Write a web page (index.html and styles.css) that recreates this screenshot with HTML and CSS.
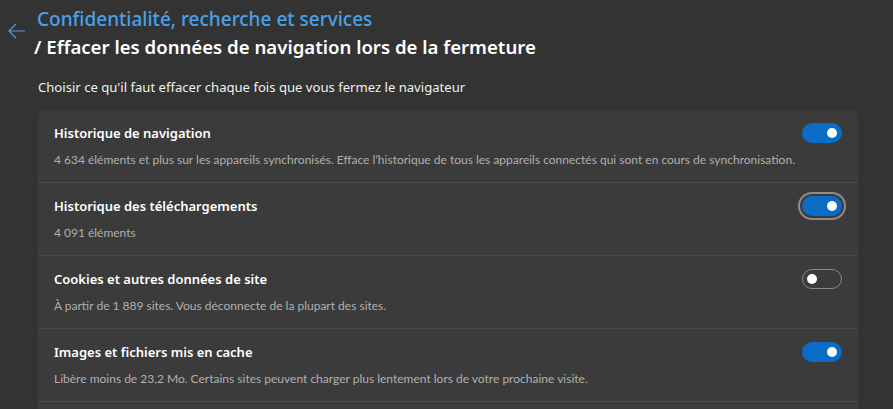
FILE: index.html
```html
<!DOCTYPE html>
<html lang="fr">
<head>
<meta charset="utf-8">
<link rel="stylesheet" href="styles.css">
</head>
<body>
<div class="page">
  <header class="head">
    <svg class="back" width="18" height="16" viewBox="0 0 18 16"><path d="M8 1 L1 8 L8 15 M1 8 H17" fill="none" stroke="#5a9bd8" stroke-width="1.2"/></svg>
    <div class="titles">
      <div class="crumb">Confidentialité, recherche et services</div>
      <h1 class="title">/ Effacer les données de navigation lors de la fermeture</h1>
    </div>
  </header>
  <p class="intro">Choisir ce qu'il faut effacer chaque fois que vous fermez le navigateur</p>
  <section class="card">
    <div class="row">
      <div class="text">
        <div class="name">Historique de navigation</div>
        <div class="desc">4&#8239;634 éléments et plus sur les appareils synchronisés. Efface l’historique de tous les appareils connectés qui sont en cours de synchronisation.</div>
      </div>
      <span class="toggle on"></span>
    </div>
    <div class="row">
      <div class="text">
        <div class="name">Historique des téléchargements</div>
        <div class="desc">4&#8239;091 éléments</div>
      </div>
      <span class="toggle on focus"></span>
    </div>
    <div class="row">
      <div class="text">
        <div class="name">Cookies et autres données de site</div>
        <div class="desc">À partir de 1&#8239;889 sites. Vous déconnecte de la plupart des sites.</div>
      </div>
      <span class="toggle off"></span>
    </div>
    <div class="row">
      <div class="text">
        <div class="name">Images et fichiers mis en cache</div>
        <div class="desc">Libère moins de 23,2 Mo. Certains sites peuvent charger plus lentement lors de votre prochaine visite.</div>
      </div>
      <span class="toggle on"></span>
    </div>
    <div class="row"></div>
  </section>
</div>
</body>
</html>
```
FILE: styles.css
```css
html, body {
  margin: 0;
  padding: 0;
  background: #333333;
  height: 100%;
  overflow: hidden;
}
body {
  font-family: "Noto Sans", "Open Sans", sans-serif;
  color: #ffffff;
}
.page {
  padding: 0 35px 0 38px;
}
.head {
  display: flex;
  align-items: flex-start;
  margin-left: -30px;
  padding-top: 5px;
}
.back {
  margin-top: 18px;
  width: 18px;
  margin-right: 11px;
  flex: none;
}
.titles {
  display: flex;
  flex-direction: column;
}
.crumb {
  color: #4ca0e8;
  font-size: 19px;
  font-weight: 500;
  line-height: 28px;
}
.title {
  margin: 0 0 0 -3px;
  font-size: 18.6px;
  font-weight: 600;
  line-height: 28px;
  color: #ffffff;
}
.intro {
  margin: 16px 0 13px;
  font-size: 13.1px;
  line-height: 20px;
  color: #f0f0f0;
}
.card {
  background: #3b3b3b;
  border-radius: 6px 6px 0 0;
}
.row {
  display: flex;
  align-items: flex-start;
  justify-content: space-between;
  padding: 13px 16px 14px;
  min-height: 45px;
  border-bottom: 1px solid #4b4b4b;
}
.name {
  font-size: 13px;
  font-weight: 600;
  line-height: 20px;
}
.desc {
  margin-top: 9px;
  font-family: Lato, "Noto Sans", sans-serif;
  font-size: 12px;
  line-height: 16px;
  color: #b0b0b0;
}
.toggle {
  position: relative;
  flex: none;
  width: 40px;
  height: 20px;
  border-radius: 10px;
  box-sizing: border-box;
  margin-top: 0;
}
.toggle::after {
  content: "";
  position: absolute;
  top: 5px;
  width: 10px;
  height: 10px;
  border-radius: 50%;
  background: #ffffff;
}
.toggle.on {
  background: #0a6cc4;
}
.toggle.on::after {
  right: 5px;
}
.toggle.off {
  border: 1px solid #8a8a8a;
}
.toggle.off::after {
  top: 4px;
  left: 4px;
}
.toggle.focus {
  box-shadow: 0 0 0 2px #3b3b3b, 0 0 0 4px #8c8c8c;
}
```
